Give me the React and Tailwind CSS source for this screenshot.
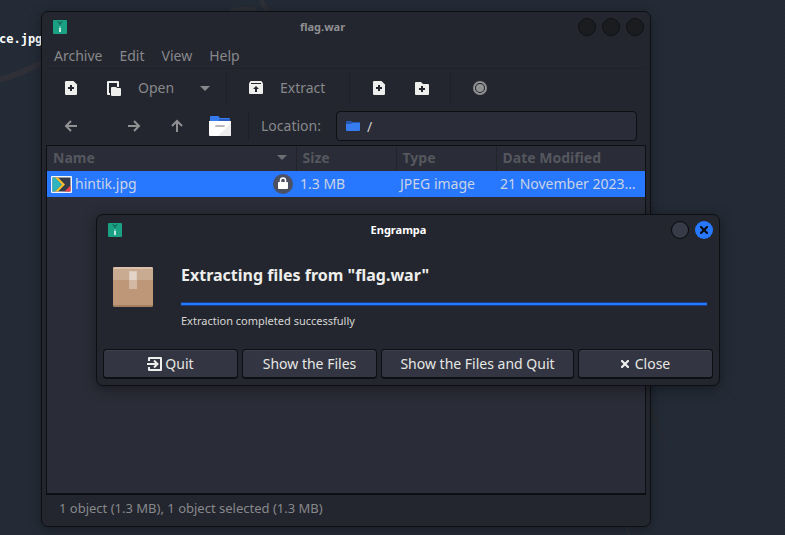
import React from "react";

function ArchiveLogo() {
  return (
    <svg className="h-3.5 w-3.5 shrink-0" viewBox="0 0 14 14" aria-hidden="true">
      <rect width="14" height="14" rx="1" fill="#1aa184" />
      <path d="M4 1h1l1 1h2l1-1h1L8 4H6z" fill="#14705f" />
      <path d="M6 4h2v2H6z" fill="#178a72" />
      <path d="M6 6h2v2H6z" fill="#4fbfa6" />
      <path d="M6 8h2v4H6z" fill="#c5e8df" />
    </svg>
  );
}

function FilePlusIcon() {
  return (
    <svg className="h-3.5 w-3.5" viewBox="0 0 14 14" aria-hidden="true">
      <path d="M2.2 0H9.5L13 3.5V12.8Q13 14 11.8 14H2.2Q1 14 1 12.8V1.2Q1 0 2.2 0z" fill="#eeeeec" />
      <path d="M6 4h2v2h2v2H8v2H6V8H4V6h2z" fill="#23262e" />
    </svg>
  );
}

function FolderPlusIcon() {
  return (
    <svg className="h-3.5 w-3.5" viewBox="0 0 14 14" aria-hidden="true">
      <path d="M1 1h5l2 2h5q1 0 1 1v9q0 1-1 1H1q-1 0-1-1V2q0-1 1-1z" fill="#eeeeec" />
      <path d="M6 5h2v2h2v2H8v2H6V9H4V7h2z" fill="#23262e" />
    </svg>
  );
}

function OpenIcon() {
  return (
    <svg className="h-[15px] w-3.5" viewBox="0 0 14 15" aria-hidden="true">
      <path d="M1 0h10q1 0 1 1v5h-2V2H2v10h1v2H1q-1 0-1-1V1q0-1 1-1z" fill="#eeeeec" />
      <path d="M5 6h4l1 1h3q1 0 1 1v6q0 1-1 1H5q-1 0-1-1V7q0-1 1-1z" fill="#eeeeec" />
    </svg>
  );
}

function ExtractIcon() {
  return (
    <svg className="h-3.5 w-3.5" viewBox="0 0 14 14" aria-hidden="true">
      <path d="M2 0h10q1 0 1.5 1.500L14 3v9q0 1-1 1H1q-1 0-1-1V3l.5-1.500Q1 0 2 0z" fill="#eeeeec" />
      <path d="M2 2h10v1H2zM7 5l3 3H8v3H6V8H4z" fill="#23262e" />
    </svg>
  );
}

function StopIcon() {
  return (
    <svg className="h-3.5 w-3.5" viewBox="0 0 14 14" aria-hidden="true">
      <circle cx="7" cy="7" r="6" fill="none" stroke="#919193" strokeWidth="2" />
      <circle cx="7" cy="7" r="4" fill="#919193" />
    </svg>
  );
}

function Arrow({ d }) {
  return (
    <svg className="h-3.5 w-3.5" viewBox="0 0 14 14" aria-hidden="true">
      <path d={d} fill="none" stroke="#919193" strokeWidth="2" />
    </svg>
  );
}

function HomeFolderIcon() {
  return (
    <svg className="h-5 w-[22px]" viewBox="0 0 22 20" aria-hidden="true">
      <path d="M1 1q0-1 1-1h7q1 0 1 1l1 1h9q1 0 1 1v2H1z" fill="#367bf0" />
      <path d="M10 3h11v2H10z" fill="#2a5fc0" />
      <path d="M0 5h22v14q0 1-1 1H1q-1 0-1-1z" fill="#ffffff" />
      <path d="M22 7v12q0 1-1 1H9z" fill="#ededed" />
      <path d="M6 10q0-1 1-1h8q1 0 1 1l-1 1H7z" fill="#b8b8b8" />
    </svg>
  );
}

function SmallFolderIcon() {
  return (
    <svg className="pointer-events-none absolute left-2.5 h-3 w-3.5" viewBox="0 0 14 12" aria-hidden="true">
      <path d="M0 2q0-1 1-1h4l1 1h7q1 0 1 1v2H0z" fill="#2459b3" />
      <path d="M0 4h5l1-1h8v7q0 1-1 1H1q-1 0-1-1z" fill="#367bf0" />
    </svg>
  );
}

function Thumbnail() {
  return (
    <svg className="h-[17px] w-[21px] shrink-0" viewBox="0 0 21 17" aria-hidden="true">
      <rect width="21" height="17" rx="1" fill="#f4f6fa" />
      <rect x="1.5" y="1.5" width="18" height="14" fill="#343b4b" />
      <path d="M1.500 1.500H4L11 8.500L4 15.500H1.500z" fill="#2fb5c0" />
      <path d="M4 1.500H7L14 8.500L7 15.500H4L11 8.500z" fill="#f9c22e" />
      <path d="M19.500 9.500v6h-6z" fill="#f0434c" />
    </svg>
  );
}

function LockBadge() {
  return (
    <svg className="h-5 w-5 shrink-0" viewBox="0 0 20 20" role="img" aria-label="Encrypted">
      <circle cx="10" cy="10" r="10" fill="#4b5163" />
      <path d="M7.500 9V6.500a2.500 2.500 0 0 1 5 0V9" fill="none" stroke="#fff" strokeWidth="1.500" />
      <rect x="5" y="8" width="10" height="7" rx="1" fill="#fff" />
    </svg>
  );
}

function PackageIcon() {
  return (
    <svg className="h-10 w-10 shrink-0" viewBox="0 0 40 40" aria-hidden="true">
      <rect width="40" height="40" rx="2" fill="#bd9777" />
      <path d="M0 13V2q0-2 2-2h36q2 0 2 2v11z" fill="#c9ab91" />
      <path d="M0 2q0-2 2-2h36q2 0 2 2z" fill="#dcc0aa" />
      <path d="M0 38h40q0 2-2 2H2q-2 0-2-2z" fill="#a58061" />
      <path d="M16 4h8v9h-8z" fill="#dccbbb" />
      <path d="M16 13h8v9h-8z" fill="#d3b9a4" />
      <path d="M17 5h6v8h-6z" fill="#e2d4c8" />
    </svg>
  );
}

function QuitIcon() {
  return (
    <svg className="h-3.5 w-[15px]" viewBox="0 0 15 14" aria-hidden="true">
      <path d="M2 4V1h12v12H2v-3" fill="none" stroke="#eeeeec" strokeWidth="2" strokeLinejoin="round" />
      <path d="M0 7h9M7 3.500L10.500 7L7 10.500" fill="none" stroke="#eeeeec" strokeWidth="2" />
    </svg>
  );
}

function CrossIcon({ color }) {
  return (
    <svg className="h-2 w-2" viewBox="0 0 8 8" aria-hidden="true">
      <path d="M1 1l6 6M7 1L1 7" stroke={color} strokeWidth="2.200" strokeLinecap="square" />
    </svg>
  );
}

function Caret({ color }) {
  return (
    <svg className="h-[5px] w-2.5 shrink-0" viewBox="0 0 10 5" aria-hidden="true">
      <path d="M0 0h10L5 5z" fill={color} />
    </svg>
  );
}

function ToolButton({ label, children }) {
  return (
    <button type="button" aria-label={label} className="flex h-8 w-[43px] shrink-0 items-center justify-center">
      {children}
    </button>
  );
}

function Divider() {
  return <div className="mx-[7px] h-[30px] w-px shrink-0 bg-[#1e2027]" />;
}

function DialogButton({ children }) {
  return (
    <button
      type="button"
      className="flex h-[30px] items-center justify-center whitespace-nowrap rounded-[4px] border border-b-2 border-[#0e0f13] bg-[#333642] text-sm text-[#e6e6e4] shadow-[inset_0_1px_0_#3c3f4c]"
    >
      {children}
    </button>
  );
}

function Wallpaper() {
  return (
    <svg className="absolute inset-0 h-full w-full" aria-hidden="true">
      <defs>
        <pattern id="hatch" width="4" height="4" patternUnits="userSpaceOnUse">
          <path d="M-1 1L1 -1M0 4L4 0M3 5L5 3" stroke="#2a303b" strokeWidth="1" opacity="0.6" />
        </pattern>
      </defs>
      <rect width="100%" height="100%" fill="url(#hatch)" />
      <path d="M-4 81Q20 74 44 62" fill="none" stroke="#2e2f37" strokeWidth="6" />
      <path d="M230 11Q242 8 256 10M261 0L267 11" fill="none" stroke="#2e2f37" strokeWidth="5" />
      <path d="M651 409Q661 424 668 455Q659 428 651 415z" fill="#2a2b32" />
      <path d="M626 527L629 535" stroke="#2e2f37" strokeWidth="2" />
    </svg>
  );
}

function ArchiveWindow() {
  return (
    <main className="absolute bottom-2 left-[41px] right-[134px] top-[11px] flex flex-col overflow-hidden rounded-[7px] border border-[#0d0f13] bg-[#23262e] text-[#87888b] shadow-[0_2px_12px_rgba(0,0,0,0.35)]">
      <header className="flex h-[30px] shrink-0 items-center pl-[11px] pr-1.5">
        <ArchiveLogo />
        <h1 className="flex-1 text-center text-[11px] font-bold text-[#8e8f92]">flag.war</h1>
        <div className="flex gap-1.5">
          <button type="button" aria-label="Minimize" className="h-[18px] w-[18px] rounded-full border border-[#111216] bg-[#1b1c20]" />
          <button type="button" aria-label="Maximize" className="h-[18px] w-[18px] rounded-full border border-[#111216] bg-[#1b1c20]" />
          <button type="button" aria-label="Close" className="h-[18px] w-[18px] rounded-full border border-[#111216] bg-[#1b1c20]" />
        </div>
      </header>

      <nav className="mx-1 flex h-[27px] shrink-0 items-center gap-[17px] border-b border-[#20222a] px-2 pt-0.5 text-sm">
        <button type="button">Archive</button>
        <button type="button">Edit</button>
        <button type="button">View</button>
        <button type="button">Help</button>
      </nav>

      <div className="flex h-[38px] shrink-0 items-center pl-[7px] text-sm">
        <ToolButton label="New archive"><FilePlusIcon /></ToolButton>
        <button type="button" className="flex h-8 w-[99px] shrink-0 items-center gap-[17px] pl-[15px]">
          <OpenIcon />
          Open
        </button>
        <button type="button" aria-label="Recent archives" className="flex h-8 w-7 shrink-0 items-center justify-center">
          <Caret color="#87888b" />
        </button>
        <Divider />
        <button type="button" className="flex h-8 w-[108px] shrink-0 items-center gap-[17px] pl-[15px]">
          <ExtractIcon />
          Extract
        </button>
        <Divider />
        <ToolButton label="Add files"><FilePlusIcon /></ToolButton>
        <ToolButton label="Add a folder"><FolderPlusIcon /></ToolButton>
        <Divider />
        <ToolButton label="Stop"><StopIcon /></ToolButton>
      </div>

      <div className="flex h-[38px] shrink-0 items-center pl-[7px] pr-[13px] text-sm">
        <ToolButton label="Back"><Arrow d="M13 7H3M7 2L2 7L7 12" /></ToolButton>
        <div className="w-5 shrink-0" />
        <ToolButton label="Forward"><Arrow d="M1 7h10M7 2L12 7L7 12" /></ToolButton>
        <ToolButton label="Up"><Arrow d="M7 13V3M2 7L7 2L12 7" /></ToolButton>
        <ToolButton label="Home"><HomeFolderIcon /></ToolButton>
        <Divider />
        <label htmlFor="location" className="w-20 shrink-0 pl-[5px]">Location:</label>
        <div className="relative flex min-w-0 flex-1 items-center">
          <SmallFolderIcon />
          <input
            id="location"
            type="text"
            defaultValue="/"
            className="h-[30px] w-full rounded-[4px] border border-[#0d0f13] bg-[#2a2c37] pl-[30px] text-sm text-[#d0d0d0]"
          />
        </div>
      </div>

      <div className="mx-1 min-h-0 flex-1 border border-b-2 border-[#0d0f13] bg-[#2a2c37]">
        <table className="w-full table-fixed border-collapse text-left text-sm">
          <colgroup>
            <col className="w-[249px]" />
            <col className="w-[100px]" />
            <col className="w-[100px]" />
            <col />
          </colgroup>
          <thead className="text-[#55575e]">
            <tr className="h-[25px]">
              <th className="border-r border-[#22242c] p-0 pb-0.5 pl-1.5 pr-[9px] font-bold">
                <div className="flex items-center justify-between">
                  Name
                  <Caret color="#6d6e73" />
                </div>
              </th>
              <th className="border-r border-[#22242c] p-0 pb-0.5 pl-1.5 font-bold">Size</th>
              <th className="border-r border-[#22242c] p-0 pb-0.5 pl-1.5 font-bold">Type</th>
              <th className="p-0 pb-0.5 pl-1.5 font-bold">Date Modified</th>
            </tr>
          </thead>
          <tbody>
            <tr className="h-[26px] bg-[#2777ff] text-[#c9d3e6]">
              <td className="p-0 pl-1 pr-[3px]">
                <div className="flex items-center gap-[3px]">
                  <Thumbnail />
                  <span className="flex-1">hintik.jpg</span>
                  <LockBadge />
                </div>
              </td>
              <td className="p-0 pl-1">1.3 MB</td>
              <td className="whitespace-nowrap p-0 pl-1">JPEG image</td>
              <td className="truncate p-0 pl-1 pr-1.5">21 November 2023…</td>
            </tr>
          </tbody>
        </table>
      </div>

      <footer className="flex h-[31px] shrink-0 items-center pb-[3px] pl-[17px] text-[13px]">
        1 object (1.3 MB), 1 object selected (1.3 MB)
      </footer>
    </main>
  );
}

function ExtractDialog() {
  return (
    <section
      role="dialog"
      aria-labelledby="dialog-title"
      className="absolute left-[96px] right-[65px] top-[214px] rounded-[7px] border border-[#0d0f13] bg-[#23262e] pb-1.5 shadow-[0_3px_14px_rgba(0,0,0,0.4)]"
    >
      <header className="flex h-[30px] items-center pl-[11px] pr-1.5">
        <ArchiveLogo />
        <h2 id="dialog-title" className="flex-1 pl-1 text-center text-[11px] font-bold text-white">Engrampa</h2>
        <div className="flex gap-1.5">
          <button type="button" aria-label="Minimize" className="h-[18px] w-[18px] rounded-full border border-[#08090b] bg-[#373a47]" />
          <button type="button" aria-label="Close dialog" className="flex h-[18px] w-[18px] items-center justify-center rounded-full bg-[#2777ff]">
            <CrossIcon color="#0b0d12" />
          </button>
        </div>
      </header>

      <div className="flex items-start gap-7 pb-[19px] pl-4 pr-3 pt-[15px]">
        <div className="pt-[7px]"><PackageIcon /></div>
        <div className="min-w-0 flex-1">
          <h3 className="text-base font-bold leading-[30px] text-[#eeeeec]">Extracting files from "flag.war"</h3>
          <div
            role="progressbar"
            aria-label="Extraction progress"
            aria-valuenow={100}
            className="mt-3 h-1 border-y border-[#173f85] bg-[#2777ff]"
          />
          <p className="mt-1.5 text-[11px] leading-[18px] text-[#d6d6d5]">Extraction completed successfully</p>
        </div>
      </div>

      <div className="grid grid-cols-[1fr_1fr_193px_1fr] gap-1 px-1.5">
        <DialogButton>
          <QuitIcon />
          <span className="ml-[3px]">Quit</span>
        </DialogButton>
        <DialogButton>Show the Files</DialogButton>
        <DialogButton>Show the Files and Quit</DialogButton>
        <DialogButton>
          <CrossIcon color="#eeeeec" />
          <span className="ml-1.5">Close</span>
        </DialogButton>
      </div>
    </section>
  );
}

export default function App() {
  return (
    <div className="relative h-screen overflow-hidden bg-[#222a35] font-['Noto_Sans','Open_Sans',sans-serif]">
      <Wallpaper />
      <span className="absolute -left-px top-[31px] font-['DejaVu_Sans_Mono',monospace] text-xs font-bold text-white">ce.jpg</span>
      <ArchiveWindow />
      <ExtractDialog />
    </div>
  );
}
